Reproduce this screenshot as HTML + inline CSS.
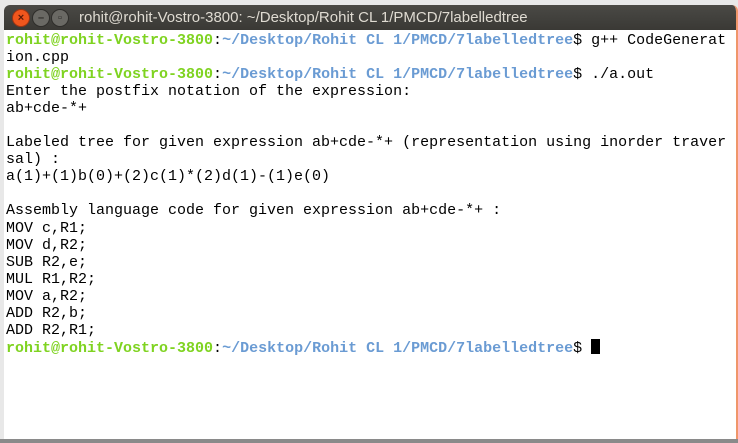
<!DOCTYPE html>
<html><head><meta charset="utf-8"><style>
html,body{margin:0;padding:0;width:738px;height:443px;overflow:hidden;background:#e8e8e8;}
.win{position:absolute;left:4px;top:5px;width:732px;height:434px;background:#fff;border-radius:6px 6px 0 0;overflow:hidden;border-right:2px solid #f0966a;}
.tb{height:25px;background:linear-gradient(#4a4945,#3a3935);color:#dfdbd2;font:15px "Liberation Sans",sans-serif;line-height:25px;}
.tb .t{position:absolute;left:75px;top:0;}
.b{position:absolute;top:4px;width:16px;height:16px;border-radius:50%;background:#6a6964;border:1px solid #2e2d2a;font-size:11px;line-height:16px;text-align:center;color:#2e2d2a;font-weight:bold;}
.term{position:absolute;left:2px;top:27px;font:15px/17.05px "Liberation Mono",monospace;color:#000;white-space:pre;}
.g{color:#7fd321;font-weight:bold;}
.u{color:#6a9bd3;font-weight:bold;}
.cur{display:inline-block;width:9px;height:15px;background:#000;vertical-align:-2px;}
.shadow{position:absolute;left:0;top:439px;width:738px;height:4px;background:#8a8a8a;}
</style></head><body>
<div class="win">
<div class="tb"><div class="b" style="left:8px;background:#f0561d;border-color:#9a3414;color:#5a1a08">×</div><div class="b" style="left:28px">–</div><div class="b" style="left:47px">▫</div><span class="t">rohit@rohit-Vostro-3800: ~/Desktop/Rohit CL 1/PMCD/7labelledtree</span></div>
<div class="term"><span class="g">rohit@rohit-Vostro-3800</span>:<span class="u">~/Desktop/Rohit CL 1/PMCD/7labelledtree</span>$ g++ CodeGenerat
ion.cpp
<span class="g">rohit@rohit-Vostro-3800</span>:<span class="u">~/Desktop/Rohit CL 1/PMCD/7labelledtree</span>$ ./a.out
Enter the postfix notation of the expression:
ab+cde-*+

Labeled tree for given expression ab+cde-*+ (representation using inorder traver
sal) :
a(1)+(1)b(0)+(2)c(1)*(2)d(1)-(1)e(0)

Assembly language code for given expression ab+cde-*+ :
MOV c,R1;
MOV d,R2;
SUB R2,e;
MUL R1,R2;
MOV a,R2;
ADD R2,b;
ADD R2,R1;
<span class="g">rohit@rohit-Vostro-3800</span>:<span class="u">~/Desktop/Rohit CL 1/PMCD/7labelledtree</span>$ <span class="cur"></span></div>
</div>
<div class="shadow"></div>
</body></html>
